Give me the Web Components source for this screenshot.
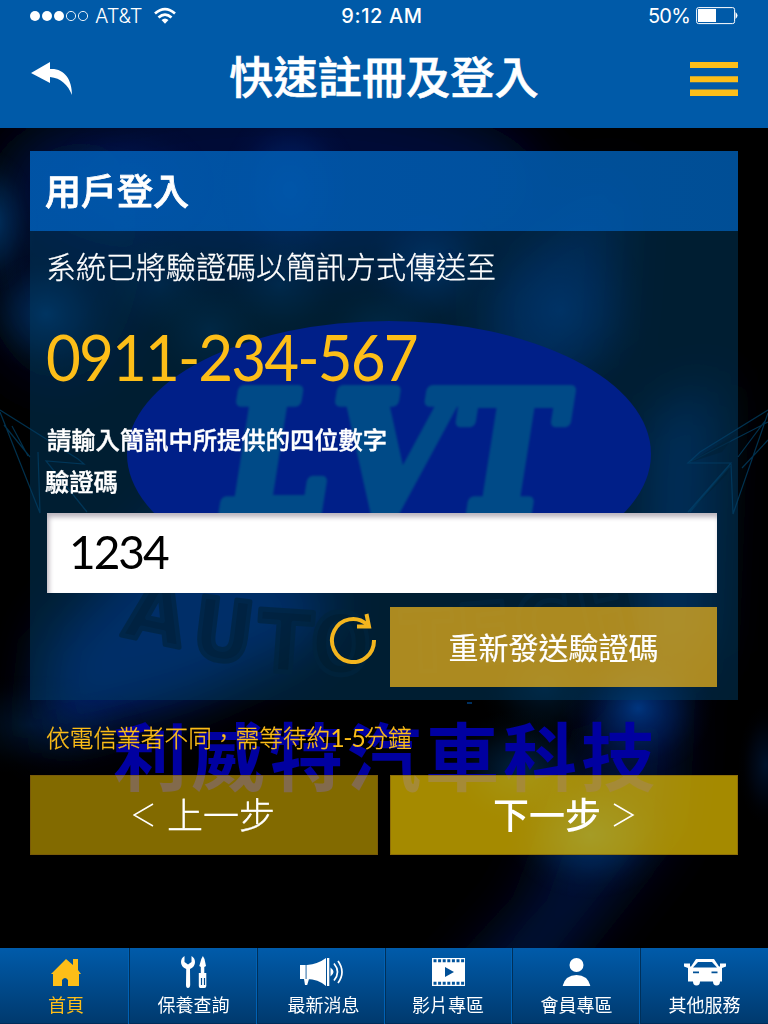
<!DOCTYPE html>
<html lang="zh-Hant">
<head>
<meta charset="utf-8">
<title>快速註冊及登入</title>
<style>
html,body{margin:0;background:#000}
body{font-family:"Noto Sans CJK TC","Liberation Sans",sans-serif;color:#fff}
</style>
</head>
<body>
<lvt-app></lvt-app>
<script>
const define=(name,html,setup)=>customElements.define(name,class extends HTMLElement{
  constructor(){
    super();
    const t=document.createElement('template');
    t.innerHTML=html;
    this.attachShadow({mode:'open'}).appendChild(t.content.cloneNode(true));
  }
  connectedCallback(){if(setup)setup(this)}
});

define('lvt-backdrop',`
<style>:host{position:absolute;inset:0;z-index:0;display:block;pointer-events:none}svg{display:block}</style>
<svg width="768" height="1024" viewBox="0 0 768 1024" aria-hidden="true">
 <defs>
  <radialGradient id="g"><stop offset="0" stop-color="#0045a0" stop-opacity=".75"/><stop offset=".5" stop-color="#003088" stop-opacity=".36"/><stop offset=".8" stop-color="#002070" stop-opacity=".09"/><stop offset="1" stop-color="#002070" stop-opacity="0"/></radialGradient>
  <radialGradient id="c"><stop offset="0" stop-color="#00509a" stop-opacity=".6"/><stop offset=".5" stop-color="#00407a" stop-opacity=".3"/><stop offset=".8" stop-color="#00305a" stop-opacity=".08"/><stop offset="1" stop-color="#00305a" stop-opacity="0"/></radialGradient>
  <filter id="b" x="-50%" y="-50%" width="200%" height="200%"><feGaussianBlur stdDeviation="26"/></filter>
  <filter id="s"><feGaussianBlur stdDeviation="1"/></filter>
 </defs>
 <rect width="768" height="1024" fill="#000"/>
 <g filter="url(#b)">
  <ellipse cx="280" cy="180" rx="260" ry="90" fill="#00145a" opacity=".6"/>
  <ellipse cx="60" cy="250" rx="80" ry="130" fill="#001a50" opacity=".45"/>
  <path d="M480 290L620 170 610 340 500 420z" fill="#003080" opacity=".55"/>
  <path d="M650 420L715 380 705 650 640 690z" fill="#00388a" opacity=".6"/>
  <path d="M50 640L190 500 340 600 300 650 190 700 40 740z" fill="#00309a" opacity=".7"/>
  <path d="M590 730L680 700 670 830 590 930 510 1030 410 1030 530 900z" fill="#00288a" opacity=".4"/>
 </g>
 <ellipse cx="130" cy="185" rx="85" ry="70" fill="url(#g)" opacity=".4"/>
 <ellipse cx="290" cy="190" rx="70" ry="85" fill="url(#g)" opacity=".8"/>
 <ellipse cx="430" cy="265" rx="70" ry="66" fill="url(#g)" opacity=".75"/>
 <ellipse cx="560" cy="310" rx="90" ry="95" fill="url(#g)" opacity=".5"/>
 <ellipse cx="-8" cy="222" rx="46" ry="72" fill="url(#c)"/>
 <ellipse cx="46" cy="314" rx="66" ry="62" fill="url(#c)" opacity=".85"/>
 <ellipse cx="160" cy="285" rx="60" ry="54" fill="url(#c)" opacity=".4"/>
 <ellipse cx="280" cy="285" rx="60" ry="54" fill="url(#c)" opacity=".45"/>
 <ellipse cx="384" cy="335" rx="62" ry="54" fill="url(#c)" opacity=".5"/>
 <ellipse cx="210" cy="330" rx="60" ry="54" fill="url(#c)" opacity=".4"/>
 <ellipse cx="638" cy="708" rx="76" ry="68" fill="url(#g)"/>
 <ellipse cx="545" cy="685" rx="66" ry="60" fill="url(#c)" opacity=".5"/>
 <ellipse cx="520" cy="770" rx="74" ry="60" fill="url(#c)" opacity=".75"/>
 <ellipse cx="590" cy="835" rx="84" ry="64" fill="url(#c)"/>
 <ellipse cx="30" cy="725" rx="115" ry="50" fill="url(#c)" opacity=".35"/>
 <ellipse cx="766" cy="765" rx="28" ry="60" fill="url(#g)" opacity=".35"/>
 <ellipse cx="389" cy="454" rx="262" ry="133" fill="#0002ac"/>
 <g font-family="DejaVu Serif" font-weight="bold" font-size="166" fill="#0058aa" stroke="#0058aa" stroke-width="12" stroke-linejoin="round" filter="url(#s)">
  <text transform="translate(217 512) skewX(-9)" textLength="103" lengthAdjust="spacingAndGlyphs">L</text>
  <text transform="translate(324 512) skewX(-9)" textLength="120" lengthAdjust="spacingAndGlyphs">V</text>
  <text transform="translate(445 512) skewX(-9)" textLength="108" lengthAdjust="spacingAndGlyphs">T</text>
 </g>
 <g fill="#000" stroke="#000c18" stroke-width="5" stroke-linejoin="round" font-family="DejaVu Sans" font-weight="bold" font-size="84" opacity=".7">
  <text transform="translate(121 635) rotate(12)" textLength="60" lengthAdjust="spacingAndGlyphs">A</text><text transform="translate(190 656) rotate(7)" textLength="60" lengthAdjust="spacingAndGlyphs">U</text><text transform="translate(256 670) rotate(4)" textLength="54" lengthAdjust="spacingAndGlyphs">T</text><text x="311" y="674" textLength="60" lengthAdjust="spacingAndGlyphs">O</text>
  <text transform="translate(402 672) rotate(-2)" textLength="52" lengthAdjust="spacingAndGlyphs">T</text><text transform="translate(460 666) rotate(-5)" textLength="54" lengthAdjust="spacingAndGlyphs">E</text><text transform="translate(519 656) rotate(-8)" textLength="58" lengthAdjust="spacingAndGlyphs">C</text><text transform="translate(584 643) rotate(-12)" textLength="62" lengthAdjust="spacingAndGlyphs">H</text>
 </g>
 <g fill="none" stroke="#00507e" stroke-width="1.2" opacity=".6">
  <path d="M0 410L78 459 84 464 46 461 87 512M0 412L40 513 38 452M4 425L30 457M12 426L28 456"/>
  <path d="M768 410L700 452 688 463 731 463 688 512M768 413L733 514 731 464M768 422L688 463M738 457L765 421M742 468L768 440M690 512L730 466"/>
 </g>
 <path d="M688 463L736 434 722 452zM690 512L731 464 727 474z" fill="#000" opacity=".45"/>
 <text x="113" y="785" font-family="Noto Sans CJK TC" font-weight="bold" font-size="74" textLength="542" fill="#0000a0">利威特汽車科技</text>
 <path d="M467 703h5" stroke="#003060" stroke-width="2"/>
</svg>`);

define('status-bar',`
<style>
:host{display:grid;grid-template-columns:1fr auto 1fr;align-items:center;height:32px;padding:0 30px;font:20px/32px Inter,sans-serif;white-space:nowrap}
.l,.r{display:flex;align-items:center}.r{justify-content:flex-end;gap:6px;letter-spacing:-.8px}
.l svg:last-child{margin-left:9px}.l span{margin-left:6px;letter-spacing:-.1px;font-weight:300;width:50px}.m{font-weight:500;letter-spacing:.6px;margin-left:-4px}
</style>
<div class="l"><svg width="59" height="12" viewBox="0 0 59 12"><g fill="#fff"><circle cx="5" cy="6" r="5"/><circle cx="17" cy="6" r="5"/><circle cx="29" cy="6" r="5"/></g><g fill="none" stroke="#fff" stroke-width=".9"><circle cx="41" cy="6" r="4.6"/><circle cx="53" cy="6" r="4.6"/></g></svg><span>AT&amp;T</span>
<svg width="22" height="18" viewBox="0 0 22 18"><g fill="none" stroke="#fff" stroke-width="2.7"><path d="M1 6.5Q11-2.3 21 6.5M4.5 10.5Q11 4.6 17.5 10.5"/></g><path d="M7.5 13Q11 10 14.5 13L11 16.8z" fill="#fff"/></svg></div>
<div class="m">9:12 AM</div>
<div class="r"><span>50%</span><svg width="42" height="18" viewBox="0 0 42 18"><rect x=".6" y=".6" width="38" height="16" rx="2" fill="none" stroke="#fff"/><path d="M2 2h18v13H2z" fill="#fff"/><path d="M39.500 5q4 3.500 0 7z" fill="#fff"/></svg></div>`);

define('app-header',`
<style>
:host{display:block;height:128px;background:#005aa8}
.bar{display:grid;grid-template-columns:48px 1fr 48px;align-items:center;height:94px;padding:0 30px}
h1{margin:0;text-align:center;font-size:44.2px;line-height:60px;font-weight:500;-webkit-text-stroke:.6px #fff;transform:translateY(-4px)}
svg{display:block}
</style>
<status-bar></status-bar>
<div class="bar"><svg width="44" height="36" viewBox="0 0 44 36"><path fill="#fff" d="M1 12L20 1v7c14-1 22 10 22 26C38 24 31 17 20 16v6z"/></svg><h1><slot></slot></h1><svg width="48" height="36" viewBox="0 0 48 36"><path fill="#fdbe18" d="M0 1h48v6H0zM0 15.200h48v6H0zM0 28.500h48v6.500H0z"/></svg></div>`);

define('login-panel',`
<style>
:host{display:block;height:549px;background:rgba(0,60,100,.5)}
header{height:80px;box-sizing:border-box;padding:0 15px;background:linear-gradient(90deg,rgba(0,94,186,.82),rgba(0,92,178,.78));font-size:36px;line-height:76px;font-weight:500;-webkit-text-stroke:.8px #fff}
.body{padding:17px 21px 0 17px}
.sent{margin:-3px 0 0 -1px;font-size:30px;line-height:40px;font-weight:300;-webkit-text-stroke:.3px #fff;white-space:nowrap}
.phone{margin:33px 0 0 -1px;font:400 64px/80px Lato,sans-serif;letter-spacing:-2px;color:#fdbe18;white-space:nowrap;width:400px;height:80px;transform:scaleX(.939) translateY(-1px);transform-origin:0 0}
.help{margin:20px 0 0;font-size:24.3px;line-height:42px;font-weight:500;-webkit-text-stroke:.4px #fff}
.help div:last-child{margin-left:-2px}
.field{display:block;height:80px;box-sizing:border-box;margin-top:11px;padding:0 22px;background:#fff;color:#000;box-shadow:inset 2px 4px 5px #b9b3bc;font:46px/78px Lato,sans-serif;letter-spacing:-2px}
.actions{display:flex;justify-content:flex-end;align-items:center;gap:12px;margin-top:14px}
.actions svg{margin-bottom:18px}
.resend{width:327px;height:80px;background:rgba(253,190,24,.68);font-size:30px;line-height:78px;text-align:center;-webkit-text-stroke:.2px #fff}
</style>
<header><slot name="title"></slot></header>
<div class="body">
 <div class="sent">系統已將驗證碼以簡訊方式傳送至</div>
 <div class="phone">0911-234-567</div>
 <div class="help"><div>請輸入簡訊中所提供的四位數字</div><div>驗證碼</div></div>
 <div class="field">1234</div>
 <div class="actions"><svg width="50" height="52" viewBox="0 0 50 52"><g fill="none" stroke="#f4b51e" stroke-width="4"><path d="M46 28A21 21.500 0 1 1 39 12.500"/><path d="M38.500 2L41 14.500H29"/></g></svg><div class="resend">重新發送驗證碼</div></div>
</div>`);

define('step-button',`
<style>
:host{display:flex;align-items:center;justify-content:center;gap:12px;box-sizing:border-box;height:80px;border:1px solid rgba(110,70,20,.4);background:rgba(250,209,0,.66);font-size:36px;line-height:80px;font-weight:500}
:host([back]){background:rgba(250,204,0,.52);font-weight:300}
:host([back]) .n,:host(:not([back])) .p{display:none}
span{transform:translateY(-2px)}
:host([back]) span{-webkit-text-stroke:.4px #fff}
</style>
<svg class="p" width="22" height="26" viewBox="0 0 22 26"><path d="M20 2L1 13l19 11" fill="none" stroke="#fff" stroke-width="1.5"/></svg><span><slot></slot></span><svg class="n" width="22" height="26" viewBox="0 0 22 26"><path d="M1 2l19 11L1 24" fill="none" stroke="#fff" stroke-width="1.5"/></svg>`);

const icons={
home:'<path d="M2 15L16 1l7 6V1h5v11l3 4h-2v12H18v-6q-3-4-6 0v6H3V16H1z"/>',
tools:'<path d="M3.500 0Q0 2 0 6q0 5 5.200 7L5 29q0 3 2 3t2.200-3L9 13q5-2 5-7 0-4-3.500-6v6L7 8.500 3.500 6zM20.300 3l1.600-3 1.600 3 1.500 7-1.700 1v6h2v13q0 2-2 2h-4q-1.500 0-1.500-2V17h2v-6l-1.500-1z"/><path d="M20.500 22v7M23.500 22v7" stroke="#004b8e" stroke-width="1.200"/>',
horn:'<path d="M0 8h5.500v14H0zM7 8Q18 7 26 1v28Q18 22 7 22zM27 1h2.300v28H27zM4 22h5l-1.800 6H5zM30.500 10.500q6 4.500 0 9z"/><path d="M5.500 8h1.500v14h-1.500z" opacity=".5"/><path d="M34 6.500q7 8.500 0 17M38 4q8 11 0 22" fill="none" stroke="currentColor" stroke-width="1.700"/>',
film:'<path d="M0 0h33v28H0z"/><path d="M1.500 2.700h31M1.500 25.300h31" stroke="#00539c" stroke-width="3" stroke-dasharray="3 1.600"/><path d="M13 9l9 5-9 5z" fill="#004f96"/>',
user:'<circle cx="14" cy="7" r="7"/><path d="M0 28Q3 17 14 17t14 11z"/>',
car:'<path fill-rule="evenodd" d="M0 5.500h6v3h1L12 1h18l5 7.500h1v-3h6v3l-4 1.500v13.500H36q0 4-3.500 4T29 23.500H16q0 4-3.500 4T9 23.500H4V10L0 8.500zM14 4L9 9.500h24L28 4zM9 13.500v1.800h6v-1.800zM27.500 13.500v1.800h6v-1.800z"/>'
};
define('tab-item',`
<style>
:host{display:grid;grid-template-rows:48px 20px;justify-items:center;box-sizing:border-box;border-right:1px solid #00305a;box-shadow:inset -1px 0 #0061b4,inset 0 -1px #002c59;font-size:18px;line-height:20px;white-space:nowrap}
:host(:last-child){border-right:0;box-shadow:inset 0 -1px #002c59}
:host([active]){color:#fdbe18}
.i{display:grid;place-items:center;height:48px;transform:translateX(var(--i,0))}svg{display:block;fill:currentColor}
div:last-child{transform:translate(var(--x,0),-2px)}
</style><div class="i"></div><div><slot></slot></div>`,el=>{
 const n=el.getAttribute('icon'),d={home:[31,29],tools:[26,32],horn:[44,30],film:[33,28],user:[28,28],car:[42,28]}[n];
 el.shadowRoot.querySelector('.i').innerHTML='<svg width="'+d[0]+'" height="'+d[1]+'" viewBox="0 0 '+d[0]+' '+d[1]+'">'+icons[n]+'</svg>';
});

define('lvt-app',`
<style>
:host{position:relative;display:flex;flex-direction:column;width:768px;height:1024px;overflow:hidden}
app-header,main,nav{position:relative;z-index:1}
main{flex:1;padding:23px 30px 0}
.note{margin:19px 16px 0;height:36px;font-size:23.7px;line-height:36px;color:#fdbe18;font-weight:300;-webkit-text-stroke:.3px #fdbe18;white-space:nowrap}
.note span{font:400 25px Lato,sans-serif;letter-spacing:-1.4px;-webkit-text-stroke:0}
.steps{display:grid;grid-template-columns:1fr 1fr;gap:12px;margin-top:20px}
nav{display:grid;grid-template-columns:130px 128px 128px 127px 128px 1fr;height:76px;background:linear-gradient(#005baa,#00396d)}
[icon=home]{--x:1.5px;--i:1px}[icon=horn]{--x:2px}[icon=film]{--x:-1px;--i:-1px}[icon=user]{--i:-.5px}
</style>
<lvt-backdrop></lvt-backdrop>
<app-header>快速註冊及登入</app-header>
<main>
 <login-panel><span slot="title">用戶登入</span></login-panel>
 <div class="note">依電信業者不同，需等待約<span>1-5</span>分鐘</div>
 <div class="steps"><step-button back>上一步</step-button><step-button>下一步</step-button></div>
</main>
<nav><tab-item icon="home" active>首頁</tab-item><tab-item icon="tools">保養查詢</tab-item><tab-item icon="horn">最新消息</tab-item><tab-item icon="film">影片專區</tab-item><tab-item icon="user">會員專區</tab-item><tab-item icon="car">其他服務</tab-item></nav>`);
</script>
</body>
</html>
